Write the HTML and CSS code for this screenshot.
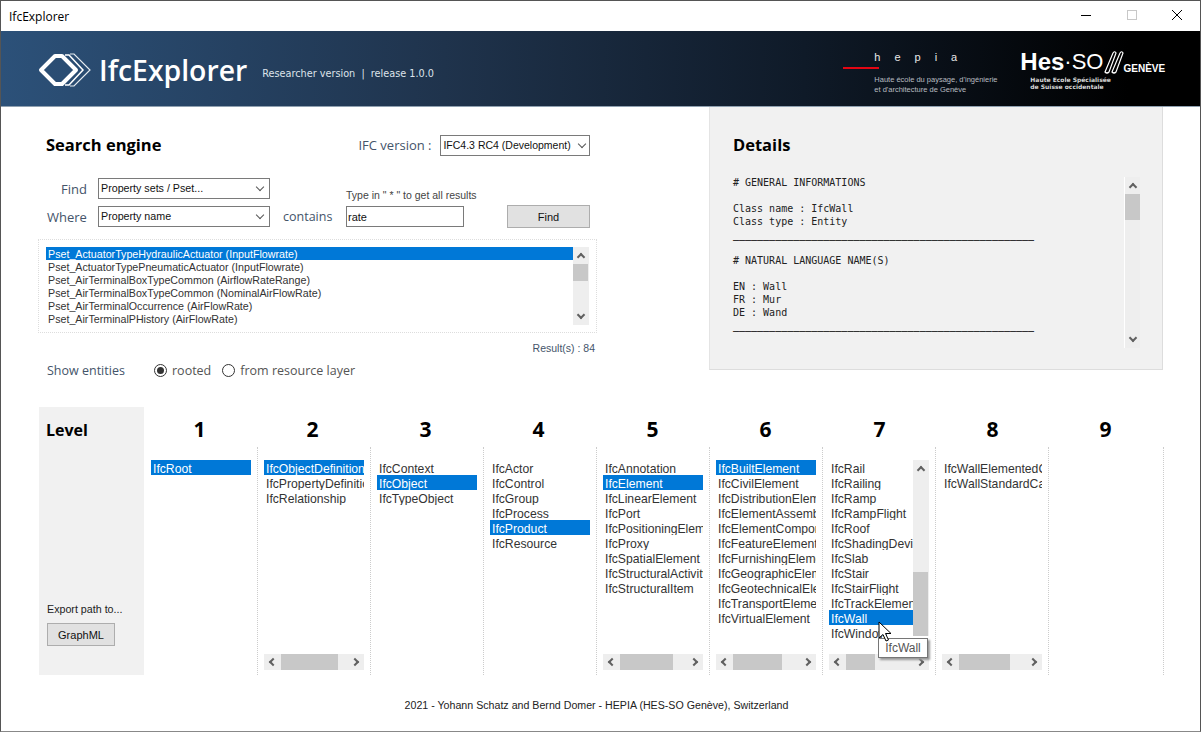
FILE: index.html
```html
<!DOCTYPE html>
<html>
<head>
    <title>IfcExplorer</title>
    <link rel="stylesheet" href="styles.css">
</head>
<body>
<div class="window">
    <div class="titlebar">
        <span class="title">IfcExplorer</span>
        <div class="win-buttons">
            <svg width="46" height="30"><path d="M21 14.500h10" stroke="#000" fill="none"/></svg>
            <svg width="46" height="30"><rect x="21.500" y="9.500" width="9" height="9" stroke="#c8c8c8" fill="none"/></svg>
            <svg width="46" height="30"><path d="M20 9l10 10M30 9l-10 10" stroke="#000" fill="none"/></svg>
        </div>
    </div>

    <div class="banner">
        <svg class="logo" width="56" height="36" viewBox="0 0 56 36">
            <polyline points="27,3 31,3 45,18 31,33 27,33" fill="none" stroke="#fff" stroke-width="1.500"/>
            <polyline points="32,2 36,2 52,18 36,34 32,34" fill="none" stroke="#e6ebf0" stroke-width="1.200"/>
            <polygon points="3,18 17,4 24,4 38,18 24,32 17,32" fill="none" stroke="#fff" stroke-width="4" stroke-linejoin="round"/>
        </svg>
        <span class="app-name">IfcExplorer</span>
        <span class="app-version">Researcher version &nbsp;|&nbsp; release 1.0.0</span>
        <div class="hepia">
            <div class="hepia-mark">
                <span class="red-line"></span>
                <span class="hepia-name">hepia</span>
            </div>
            <div class="hepia-text">Haute école du paysage, d'ingénierie<br>et d'architecture de Genève</div>
        </div>
        <div class="hes">
            <div class="hes-mark">
                <span class="hes-big">Hes</span><span class="hes-so">·SO</span>
                <svg width="22" height="26" viewBox="0 0 22 26">
                    <path d="M2 23L10 4q2-2.500 3 0L6 23q-2 2-4 0zM9 23L17 4q2-2.500 3 0L13 23q-2 2-4 0z" fill="none" stroke="#fff" stroke-width="1.200"/>
                </svg>
                <span class="hes-geneve">GENÈVE</span>
            </div>
            <div class="hes-text">Haute Ecole Spécialisée<br>de Suisse occidentale</div>
        </div>
    </div>

    <div class="top">
        <div class="search">
            <div class="search-head">
                <h2 class="heading">Search engine</h2>
                <span class="label version-label">IFC version :</span>
                <div class="select version-select">IFC4.3 RC4 (Development)<i class="arrow down thin"></i></div>
            </div>
            <div class="find-row">
                <span class="label find-label">Find</span>
                <div class="select query-select">Property sets / Pset...<i class="arrow down thin"></i></div>
                <span class="hint">Type in " * " to get all results</span>
            </div>
            <div class="where-row">
                <span class="label where-label">Where</span>
                <div class="select query-select">Property name<i class="arrow down thin"></i></div>
                <span class="label contains-label">contains</span>
                <input class="text-input" type="text" value="rate">
                <button class="btn find-btn" type="button">Find</button>
            </div>
            <div class="results">
                <div class="results-list">
                    <div class="result selected">Pset_ActuatorTypeHydraulicActuator (InputFlowrate)</div>
                    <div class="result">Pset_ActuatorTypePneumaticActuator (InputFlowrate)</div>
                    <div class="result">Pset_AirTerminalBoxTypeCommon (AirflowRateRange)</div>
                    <div class="result">Pset_AirTerminalBoxTypeCommon (NominalAirFlowRate)</div>
                    <div class="result">Pset_AirTerminalOccurrence (AirFlowRate)</div>
                    <div class="result">Pset_AirTerminalPHistory (AirFlowRate)</div>
                </div>
                <div class="vscroll results-scroll">
                    <i class="arrow up"></i>
                    <span class="vthumb" style="top: 17px; height: 17px"></span>
                    <i class="arrow down"></i>
                </div>
            </div>
            <div class="result-count">Result(s) : 84</div>
            <div class="show-row">
                <span class="label show-label">Show entities</span>
                <span class="radio checked"></span><span class="radio-text rooted">rooted</span>
                <span class="radio"></span><span class="radio-text">from resource layer</span>
            </div>
        </div>

        <div class="details">
            <h2 class="heading details-heading">Details</h2>
            <div class="details-body">
<pre class="details-text"># GENERAL INFORMATIONS

Class name : IfcWall
Class type : Entity
<span class="rule">__________________________________________________</span>

# NATURAL LANGUAGE NAME(S)

EN : Wall
FR : Mur
DE : Wand
<span class="rule">__________________________________________________</span></pre>
                <div class="vscroll details-scroll">
                    <i class="arrow up"></i>
                    <span class="vthumb" style="top: 17px; height: 26px"></span>
                    <i class="arrow down"></i>
                </div>
            </div>
        </div>
    </div>

    <div class="levels">
        <div class="level-panel">
            <div class="level-title">Level</div>
            <div class="export">
                <div class="export-label">Export path to...</div>
                <button class="btn graph-btn" type="button">GraphML</button>
            </div>
        </div>

        <div class="col">
            <div class="col-num">1</div>
            <div class="col-body">
                <div class="list">
                    <div class="item selected">IfcRoot</div>
                </div>
            </div>
        </div>

        <div class="col">
            <div class="col-num">2</div>
            <div class="col-body">
                <div class="list">
                    <div class="item selected">IfcObjectDefinition</div>
                    <div class="item">IfcPropertyDefinition</div>
                    <div class="item">IfcRelationship</div>
                </div>
                <div class="hscroll">
                    <i class="arrow left"></i>
                    <span class="hthumb" style="width: 57px"></span>
                    <i class="arrow right"></i>
                </div>
            </div>
        </div>

        <div class="col">
            <div class="col-num">3</div>
            <div class="col-body">
                <div class="list">
                    <div class="item">IfcContext</div>
                    <div class="item selected">IfcObject</div>
                    <div class="item">IfcTypeObject</div>
                </div>
            </div>
        </div>

        <div class="col">
            <div class="col-num">4</div>
            <div class="col-body">
                <div class="list">
                    <div class="item">IfcActor</div>
                    <div class="item">IfcControl</div>
                    <div class="item">IfcGroup</div>
                    <div class="item">IfcProcess</div>
                    <div class="item selected">IfcProduct</div>
                    <div class="item">IfcResource</div>
                </div>
            </div>
        </div>

        <div class="col">
            <div class="col-num">5</div>
            <div class="col-body">
                <div class="list">
                    <div class="item">IfcAnnotation</div>
                    <div class="item selected">IfcElement</div>
                    <div class="item">IfcLinearElement</div>
                    <div class="item">IfcPort</div>
                    <div class="item">IfcPositioningElement</div>
                    <div class="item">IfcProxy</div>
                    <div class="item">IfcSpatialElement</div>
                    <div class="item">IfcStructuralActivity</div>
                    <div class="item">IfcStructuralItem</div>
                </div>
                <div class="hscroll">
                    <i class="arrow left"></i>
                    <span class="hthumb" style="width: 53px"></span>
                    <i class="arrow right"></i>
                </div>
            </div>
        </div>

        <div class="col">
            <div class="col-num">6</div>
            <div class="col-body">
                <div class="list">
                    <div class="item selected">IfcBuiltElement</div>
                    <div class="item">IfcCivilElement</div>
                    <div class="item">IfcDistributionElement</div>
                    <div class="item">IfcElementAssembly</div>
                    <div class="item">IfcElementComponent</div>
                    <div class="item">IfcFeatureElement</div>
                    <div class="item">IfcFurnishingElement</div>
                    <div class="item">IfcGeographicElement</div>
                    <div class="item">IfcGeotechnicalElement</div>
                    <div class="item">IfcTransportElement</div>
                    <div class="item">IfcVirtualElement</div>
                </div>
                <div class="hscroll">
                    <i class="arrow left"></i>
                    <span class="hthumb" style="width: 49px"></span>
                    <i class="arrow right"></i>
                </div>
            </div>
        </div>

        <div class="col col-wall">
            <div class="col-num">7</div>
            <div class="col-body">
                <div class="list-wrap">
                    <div class="list short">
                        <div class="item">IfcRail</div>
                        <div class="item">IfcRailing</div>
                        <div class="item">IfcRamp</div>
                        <div class="item">IfcRampFlight</div>
                        <div class="item">IfcRoof</div>
                        <div class="item">IfcShadingDevice</div>
                        <div class="item">IfcSlab</div>
                        <div class="item">IfcStair</div>
                        <div class="item">IfcStairFlight</div>
                        <div class="item">IfcTrackElement</div>
                        <div class="item selected">IfcWall</div>
                        <div class="item">IfcWindow</div>
                    </div>
                    <div class="vscroll wall-scroll">
                        <i class="arrow up"></i>
                        <span class="vthumb" style="top: 112px; height: 64px"></span>
                    </div>
                </div>
                <div class="hscroll">
                    <i class="arrow left"></i>
                    <span class="hthumb" style="width: 29px"></span>
                    <i class="arrow right"></i>
                </div>
            </div>
            <svg class="cursor" width="15" height="22" viewBox="0 0 15 22">
                <path d="M1 1v16l4-3.500 3 6.500 2.500-1-3-6.500h5.500z" fill="#fff" stroke="#000"/>
            </svg>
            <div class="tooltip">IfcWall</div>
        </div>

        <div class="col">
            <div class="col-num">8</div>
            <div class="col-body">
                <div class="list">
                    <div class="item">IfcWallElementedCase</div>
                    <div class="item">IfcWallStandardCase</div>
                </div>
                <div class="hscroll">
                    <i class="arrow left"></i>
                    <span class="hthumb" style="width: 51px"></span>
                    <i class="arrow right"></i>
                </div>
            </div>
        </div>

        <div class="col">
            <div class="col-num">9</div>
            <div class="col-body"></div>
        </div>
    </div>

    <div class="footer">2021 - Yohann Schatz and Bernd Domer - HEPIA (HES-SO Genève), Switzerland</div>
</div>
</body>
</html>
```

FILE: styles.css
```css
body {
    margin: 0;
    background-color: #fff;
    font-family: "Liberation Sans", Arial, sans-serif;
    color: #222;
}

.window {
    width: 1201px;
    height: 732px;
    box-sizing: border-box;
    border: 1px solid #555;
    border-bottom-color: #888;
    overflow: hidden;
    display: flex;
    flex-direction: column;
}

/* title bar */
.titlebar {
    height: 30px;
    display: flex;
    align-items: center;
    justify-content: space-between;
    flex-shrink: 0;
}

.title {
    margin-left: 8px;
    font-family: "Open Sans", sans-serif;
    font-size: 12px;
    color: #000;
}

.win-buttons {
    display: flex;
    margin-right: 2px;
}

.win-buttons svg {
    display: block;
}

/* banner */
.banner {
    height: 75px;
    flex-shrink: 0;
    display: flex;
    align-items: flex-start;
    background: linear-gradient(90deg, #2c5179 0%, #1f334c 37%, #0f1a28 67%, #000 94%);
    border-bottom: 1px solid #8fa0b0;
    color: #fff;
}

.logo {
    margin: 21px 0 0 37px;
}

.app-name {
    margin: 15px 0 0 5px;
    font-family: "Open Sans", sans-serif;
    font-weight: 600;
    font-size: 28.400px;
    line-height: 48px;
}

.app-version {
    margin: 35px 0 0 15px;
    font-family: "DejaVu Sans", sans-serif;
    font-size: 9.700px;
    line-height: 16px;
    color: #dde3ea;
    width: 200px;
}

.hepia {
    margin: 19px 0 0 381px;
    width: 148px;
}

.hepia-mark {
    display: flex;
    align-items: flex-start;
    height: 21px;
}

.red-line {
    width: 36px;
    height: 2px;
    margin-top: 17px;
    background-color: #e30613;
}

.hepia-name {
    margin-left: -5px;
    font-size: 11px;
    line-height: 14px;
    letter-spacing: 14px;
    color: #e8e8e8;
}

.hepia-text {
    margin: 4px 0 0 31px;
    width: 140px;
    font-size: 7.500px;
    line-height: 9.500px;
    color: #b8bcc0;
    white-space: nowrap;
}

.hes {
    margin: 17px 0 0 29px;
}

.hes-mark {
    display: flex;
    align-items: flex-end;
    height: 28px;
    white-space: nowrap;
}

.hes-big {
    font-weight: bold;
    font-size: 24px;
    line-height: 28px;
}

.hes-so {
    font-size: 22px;
    line-height: 28px;
}

.hes-mark svg {
    margin: 0 0 1px 0;
}

.hes-geneve {
    font-weight: bold;
    font-size: 10px;
    line-height: 13px;
    margin-left: -2px;
    margin-bottom: 1px;
}

.hes-text {
    margin: 1px 0 0 10px;
    font-family: "DejaVu Sans", sans-serif;
    font-weight: bold;
    font-size: 6px;
    line-height: 6.500px;
    text-align: center;
    width: 72px;
    white-space: nowrap;
    color: #d8d8d8;
}

/* top area */
.top {
    height: 300px;
    flex-shrink: 0;
    display: flex;
    align-items: flex-start;
}

.search {
    width: 708px;
    box-sizing: border-box;
    padding-left: 37px;
}

.heading {
    margin: 0;
    font-family: "Open Sans", sans-serif;
    font-weight: bold;
    font-size: 16.500px;
    line-height: 22px;
    color: #000;
}

.label {
    font-family: "Open Sans", sans-serif;
    font-size: 12.500px;
    color: #44546a;
}

.search-head {
    display: flex;
    align-items: center;
    height: 22px;
    margin: 27px 0 0 8px;
}

.version-label {
    margin-left: 197px;
    width: 82px;
    font-size: 13px;
}

.select {
    box-sizing: border-box;
    height: 21px;
    border: 1px solid #7a7a7a;
    font-size: 10.700px;
    line-height: 19px;
    padding-left: 2px;
    position: relative;
    color: #111;
    white-space: nowrap;
    background-color: #fff;
}

.version-select {
    width: 150px;
    font-size: 10.500px;
}

.version-select .arrow.thin {
    right: 4px;
}

.query-select {
    width: 172px;
}

.find-row,
.where-row {
    display: flex;
    align-items: center;
}

.find-row {
    height: 21px;
    margin-top: 22px;
}

.where-row {
    height: 23px;
    margin-top: 6px;
}

.find-label {
    width: 60px;
    text-align: right;
    padding-right: 11px;
    box-sizing: border-box;
    font-size: 13px;
}

.where-label {
    width: 60px;
    padding-left: 9px;
    box-sizing: border-box;
    font-size: 13px;
}

.hint {
    margin: 12px 0 0 76px;
    font-size: 10.500px;
    color: #444;
    white-space: nowrap;
}

.contains-label {
    width: 76px;
    padding-left: 13px;
    box-sizing: border-box;
}

.text-input {
    box-sizing: border-box;
    width: 118px;
    height: 21px;
    border: 1px solid #7a7a7a;
    padding: 0 1px;
    font-family: "Liberation Sans", sans-serif;
    font-size: 11px;
    color: #111;
    outline: none;
}

.btn {
    box-sizing: border-box;
    border: 1px solid #adadad;
    background-color: #e1e1e1;
    font-family: "Liberation Sans", sans-serif;
    font-size: 11px;
    color: #111;
    padding: 0;
}

.find-btn {
    width: 83px;
    height: 23px;
    margin-left: 43px;
}

.results {
    display: flex;
    box-sizing: border-box;
    width: 559px;
    height: 94px;
    margin-top: 11px;
    padding: 7px 6px 7px 7px;
    border: 1px dotted #ddd;
}

.results-list {
    width: 527px;
    flex-shrink: 0;
    font-size: 10.700px;
    line-height: 12px;
}

.result {
    padding: 1px 0 0 2px;
    color: #333;
    white-space: nowrap;
}

.result.selected,
.item.selected {
    background-color: #0078d7;
    color: #fff;
}

.result-count {
    width: 557px;
    margin-top: 8px;
    text-align: right;
    font-size: 10.500px;
    line-height: 14px;
    color: #44546a;
}

.show-row {
    display: flex;
    align-items: center;
    height: 20px;
    margin: 5px 0 0 9px;
}

.show-label {
    width: 107px;
}

.radio {
    box-sizing: border-box;
    width: 13px;
    height: 13px;
    border: 1px solid #333;
    border-radius: 50%;
    margin-right: 5px;
    position: relative;
}

.radio.checked::after {
    content: "";
    position: absolute;
    left: 2px;
    top: 2px;
    width: 7px;
    height: 7px;
    border-radius: 50%;
    background-color: #333;
}

.radio-text {
    font-family: "Open Sans", sans-serif;
    font-size: 12.500px;
    color: #555;
}

.rooted {
    margin-right: 11px;
}

/* details */
.details {
    box-sizing: border-box;
    width: 454px;
    height: 263px;
    background-color: #f1f1f1;
    border-right: 1px solid #ddd;
    border-bottom: 1px solid #ddd;
    border-left: 1px solid #e4e4e4;
    padding: 27px 0 0 23px;
}

.details-body {
    display: flex;
    margin-top: 20px;
}

.details-text {
    width: 391px;
    margin: 0;
    font-family: "DejaVu Sans Mono", monospace;
    font-size: 10px;
    line-height: 13px;
    color: #222;
}

.rule {
    font-weight: bold;
    color: #333;
}

/* scrollbars */
.vscroll {
    position: relative;
    background-color: #eee;
    flex-shrink: 0;
    width: 16px;
}

.vthumb {
    position: absolute;
    left: 0;
    width: 15px;
    background-color: #c8c8c8;
}

.results-scroll {
    height: 78px;
}

.details-scroll {
    height: 171px;
    margin-top: 1px;
    border-left: 1px solid #fff;
    box-sizing: border-box;
}

.wall-scroll {
    height: 176px;
}

.hscroll {
    display: flex;
    align-items: center;
    height: 16px;
    margin: auto 0 5px 6px;
    width: 100px;
    background-color: #eee;
    position: relative;
}

.hthumb {
    height: 16px;
    margin-left: 17px;
    background-color: #c8c8c8;
}

.arrow {
    position: absolute;
    box-sizing: border-box;
    width: 6px;
    height: 6px;
    border-top: 2px solid #606060;
    border-left: 2px solid #606060;
}

.arrow.up {
    left: 5px;
    top: 7px;
    transform: rotate(45deg);
}

.arrow.down {
    left: 5px;
    bottom: 7px;
    transform: rotate(225deg);
}

.arrow.left {
    left: 6px;
    top: 5px;
    transform: rotate(-45deg);
}

.arrow.right {
    right: 6px;
    top: 5px;
    transform: rotate(135deg);
}

.arrow.thin {
    width: 6px;
    height: 6px;
    top: 5px;
    right: 6px;
    left: auto;
    bottom: auto;
    border-width: 1px;
    border-color: #555;
}

/* levels */
.levels {
    height: 268px;
    flex-shrink: 0;
    display: flex;
    margin-left: 38px;
}

.level-panel {
    width: 105px;
    margin-right: 1px;
    flex-shrink: 0;
    box-sizing: border-box;
    background-color: #f1f1f1;
    padding: 12px 0 0 7px;
    display: flex;
    flex-direction: column;
}

.level-title {
    font-family: "Open Sans", sans-serif;
    font-weight: bold;
    font-size: 16px;
    line-height: 22px;
    color: #000;
}

.export {
    margin-top: auto;
    margin-bottom: 29px;
    margin-left: 1px;
}

.export-label {
    font-size: 10.700px;
    line-height: 14px;
    color: #222;
    margin-bottom: 7px;
}

.graph-btn {
    width: 68px;
    height: 23px;
}

.col {
    width: 113px;
    flex-shrink: 0;
    display: flex;
    flex-direction: column;
    position: relative;
}

.col:last-child {
    width: 115px;
}

.col-num {
    height: 40px;
    box-sizing: border-box;
    padding-top: 8px;
    padding-right: 4px;
    text-align: center;
    font-family: "Open Sans", sans-serif;
    font-weight: bold;
    font-size: 21px;
    line-height: 29px;
    color: #000;
}

.col:nth-child(n+6) .col-num {
    padding-right: 2px;
}

.col:nth-child(n+8) .col-num {
    padding-right: 0;
}

.col:last-child .col-num {
    padding-right: 2px;
}

.col-body {
    flex: 1;
    display: flex;
    flex-direction: column;
    box-sizing: border-box;
    padding-top: 13px;
    border-right: 1px dotted #ccc;
}

.list {
    width: 100px;
    margin-left: 6px;
    font-size: 12.200px;
    line-height: 12px;
    overflow: hidden;
}

.list.short {
    width: 84px;
}

.list-wrap {
    display: flex;
    align-items: flex-start;
    margin-right: 5px;
}

.item {
    padding: 3px 0 0 2px;
    color: #333;
    white-space: nowrap;
    overflow: hidden;
}

/* hovering items */
.tooltip {
    position: absolute;
    left: 55px;
    top: 231px;
    box-sizing: border-box;
    width: 50px;
    height: 20px;
    border: 1px solid #767676;
    background-color: #fff;
    box-shadow: 2px 2px 2px #999;
    font-size: 12px;
    line-height: 18px;
    text-align: center;
    color: #555;
}

.cursor {
    position: absolute;
    left: 55px;
    top: 214px;
    z-index: 2;
}

.footer {
    flex: 1;
    padding-top: 24px;
    text-align: center;
    padding-right: 8px;
    font-size: 10.650px;
    color: #222;
}
```
